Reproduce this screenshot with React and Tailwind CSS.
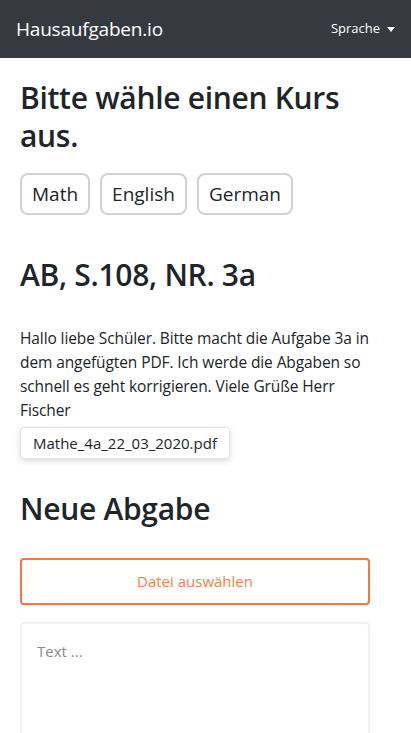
import { useState } from 'react'

const font = { fontFamily: '"Open Sans", "Noto Sans", sans-serif' }

// ── Navbar ────────────────────────────────────────────────────
function Navbar() {
  return (
    <nav className="h-[58px] bg-[#343a40] flex items-center justify-between px-4">
      <span className="text-white text-[19px] tracking-[-0.2px]">Hausaufgaben.io</span>
      <button className="flex items-center gap-[7px] text-white text-[13px]">
        Sprache
        <span className="block w-0 h-0 border-l-[4px] border-r-[4px] border-t-[5px] border-l-transparent border-r-transparent border-t-white" />
      </button>
    </nav>
  )
}

// ── CourseButton ──────────────────────────────────────────────
function CourseButton({ children }) {
  return (
    <button className="h-[42px] px-[10px] rounded-lg border-2 border-[#d2d2d2] text-[19px] text-[#212529] bg-white">
      {children}
    </button>
  )
}

export default function App() {
  const [text, setText] = useState('')
  const courses = ['Math', 'English', 'German']

  return (
    <div className="min-h-screen bg-white text-[#212529]" style={font}>
      <Navbar />
      <main className="pl-5 pr-[41px] pt-[21px]">
        <h1 className="text-[30px] leading-[38px] font-semibold tracking-[-0.3px]">Bitte wähle einen Kurs aus.</h1>
        <div className="flex gap-[10px] mt-[18px]">
          {courses.map(c => <CourseButton key={c}>{c}</CourseButton>)}
        </div>

        <h2 className="text-[30px] leading-[38px] font-semibold mt-[41px] tracking-[-0.3px]">AB, S.108, NR. 3a</h2>
        <p className="mt-[32px] text-[15.5px] leading-[24px] tracking-[-0.1px]">
          Hallo liebe Schüler. Bitte macht die Aufgabe 3a in dem angefügten PDF. Ich werde die Abgaben so schnell es geht korrigieren. Viele Grüße Herr Fischer
        </p>
        <div className="mt-[5px]">
          <span className="inline-flex items-center h-[32px] px-3 rounded border border-[#e4e4e4] shadow-[0_2px_6px_rgba(0,0,0,0.15)] text-[15px]">
            Mathe_4a_22_03_2020.pdf
          </span>
        </div>

        <h2 className="text-[30px] leading-[38px] font-semibold mt-[31px] tracking-[-0.3px]">Neue Abgabe</h2>
        <button className="mt-[30px] w-full h-[47px] rounded border-2 border-[#f4793b] text-[#f4804a] text-[15px]">
          Datei auswählen
        </button>
        <textarea
          value={text}
          onChange={e => setText(e.target.value)}
          placeholder="Text ..."
          className="mt-[17px] w-full h-[140px] rounded border-2 border-[#f1f1f1] px-[15px] py-[16px] text-[15px] placeholder:text-[#8a8a8a] resize-none outline-none"
        />
      </main>
    </div>
  )
}
